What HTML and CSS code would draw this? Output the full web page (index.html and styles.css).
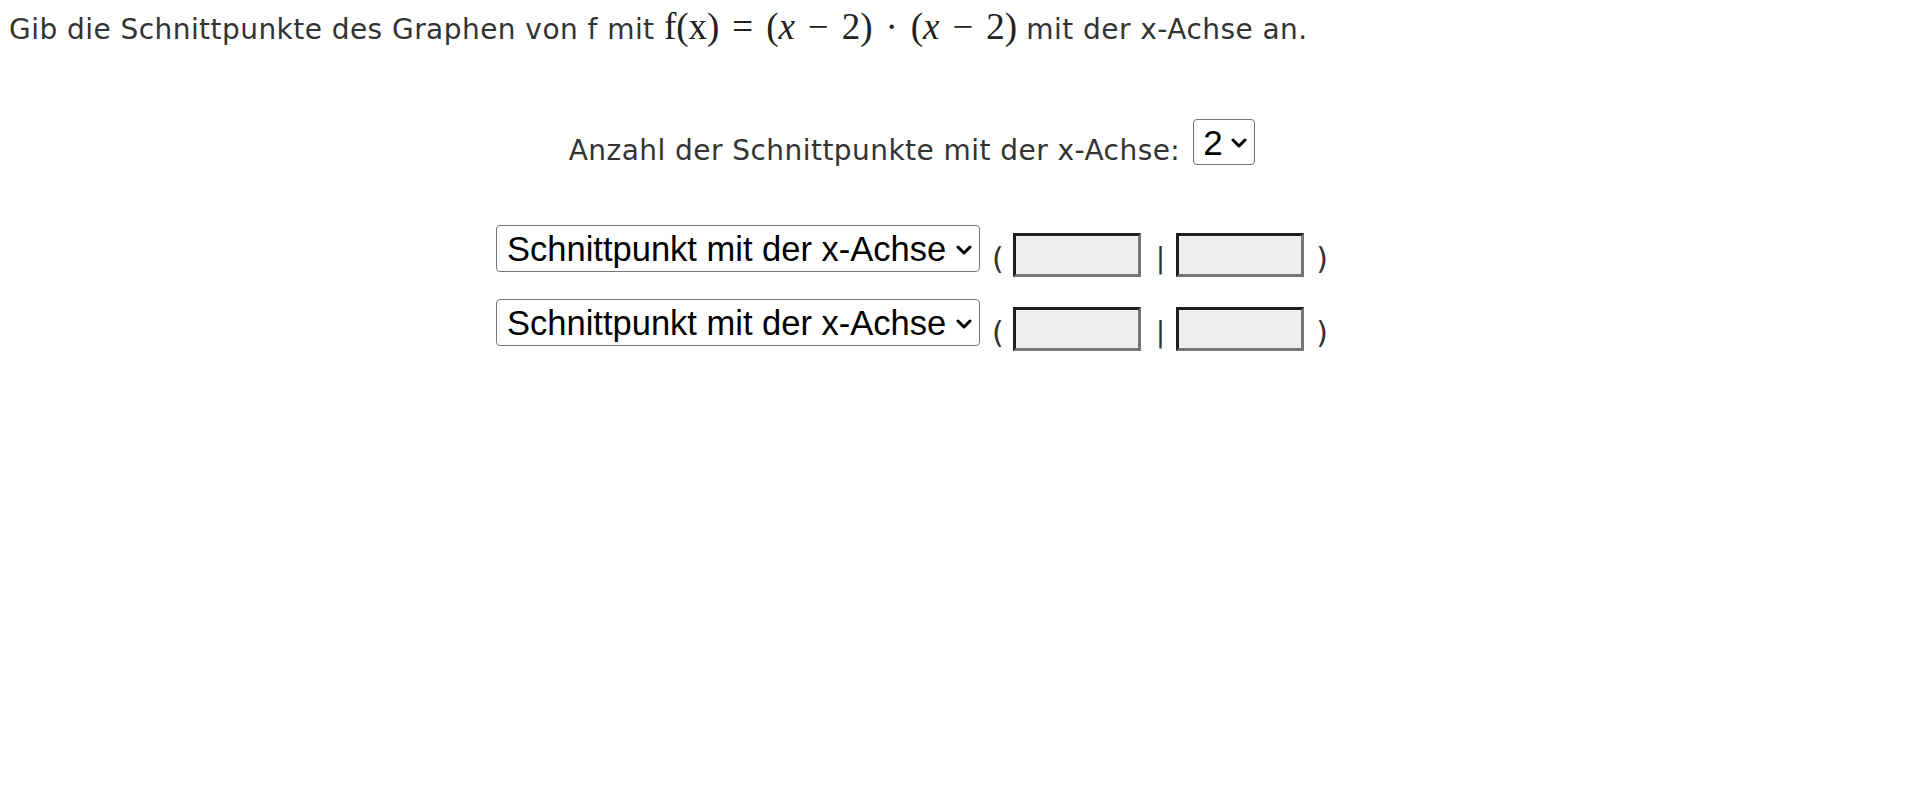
FILE: index.html
```html
<!DOCTYPE html>
<html lang="de">
<head>
<meta charset="utf-8">
<title>Schnittpunkte mit der x-Achse</title>
<link rel="stylesheet" href="styles.css">
</head>
<body>
<p class="question">Gib die Schnittpunkte des Graphen von f mit <span class="math"><span class="mrm">f(x)</span><span class="rel">=</span>(<i>x</i><span class="bin">−</span>2)<span class="bin">·</span>(<i>x</i><span class="bin">−</span>2)</span> mit der x-Achse an.</p>
<div class="task">
  <div class="count-row">
    <span class="label">Anzahl der Schnittpunkte mit der x-Achse:</span>
    <div class="sel sel-small">
      <select class="select"><option>2</option></select>
      <svg class="chev" width="16" height="10" viewBox="0 0 16 10"><polyline points="2,2 8,8 14,2" fill="none" stroke="#000" stroke-width="3" stroke-linecap="round" stroke-linejoin="round"/></svg>
    </div>
  </div>
  <div class="point-row">
    <div class="sel sel-wide">
      <select class="select"><option>Schnittpunkt mit der x-Achse</option></select>
      <svg class="chev" width="16" height="10" viewBox="0 0 16 10"><polyline points="2,2 8,8 14,2" fill="none" stroke="#000" stroke-width="3" stroke-linecap="round" stroke-linejoin="round"/></svg>
    </div>
    <span class="paren open">(</span>
    <input class="coord" type="text">
    <span class="bar">|</span>
    <input class="coord" type="text">
    <span class="paren close">)</span>
  </div>
  <div class="point-row">
    <div class="sel sel-wide">
      <select class="select"><option>Schnittpunkt mit der x-Achse</option></select>
      <svg class="chev" width="16" height="10" viewBox="0 0 16 10"><polyline points="2,2 8,8 14,2" fill="none" stroke="#000" stroke-width="3" stroke-linecap="round" stroke-linejoin="round"/></svg>
    </div>
    <span class="paren open">(</span>
    <input class="coord" type="text">
    <span class="bar">|</span>
    <input class="coord" type="text">
    <span class="paren close">)</span>
  </div>
</div>
</body>
</html>
```
FILE: styles.css
```css
html, body {
  background: #ffffff;
}
body {
  margin: 8px;
  font-family: "DejaVu Sans", Verdana, sans-serif;
  font-size: 28px;
  color: #333333;
}
.question {
  margin: 0;
  line-height: 42px;
  padding-left: 1px;
  letter-spacing: 0.45px;
}
.math {
  font-family: "Liberation Serif", "DejaVu Serif", serif;
  font-size: 37px;
  line-height: 1;
  letter-spacing: 0;
  color: #222222;
}
.math i {
  font-style: italic;
}
.rel {
  margin: 0 0.35em;
}
.bin {
  margin: 0 0.35em;
}
.task {
  display: flex;
  flex-direction: column;
  align-items: center;
  padding-right: 96px;
  margin-top: 68px;
}
.count-row {
  display: flex;
  align-items: flex-end;
  gap: 13px;
}
.label {
  line-height: 30px;
  margin-bottom: -1px;
  letter-spacing: 0.45px;
}
.sel {
  position: relative;
}
.select {
  appearance: none;
  -webkit-appearance: none;
  margin: 0;
  background: #ffffff;
  border: 1px solid #767676;
  border-radius: 4px;
  font-family: "Liberation Sans", Arial, sans-serif;
  font-size: 34.5px;
  color: #000000;
  padding: 0 0 0 9px;
  display: block;
}
.sel-small .select {
  width: 62px;
  height: 46px;
  font-size: 35px;
}
.sel-wide .select {
  width: 484px;
  height: 47px;
  padding-left: 10px;
}
.chev {
  position: absolute;
  right: 8px;
  top: 50%;
  margin-top: -4px;
  pointer-events: none;
}
.point-row {
  display: flex;
  align-items: flex-start;
  margin-top: 60px;
}
.point-row + .point-row {
  margin-top: 22px;
}
.paren, .bar {
  line-height: 30px;
  margin-top: 19px;
}
.paren {
  font-size: 30px;
}
.paren.open {
  margin-left: 12px;
  margin-right: 9px;
}
.bar {
  margin: 19px 11px 0 15px;
}
.paren.close {
  margin-left: 12px;
}
.coord {
  margin: 8px 0 0 0;
  width: 128px;
  height: 44px;
  box-sizing: border-box;
  background: #eeeeee;
  border-style: solid;
  border-width: 3px;
  border-color: #1f1f1f #767676 #767676 #1f1f1f;
  padding: 0 4px;
  font-size: 20px;
}
```
